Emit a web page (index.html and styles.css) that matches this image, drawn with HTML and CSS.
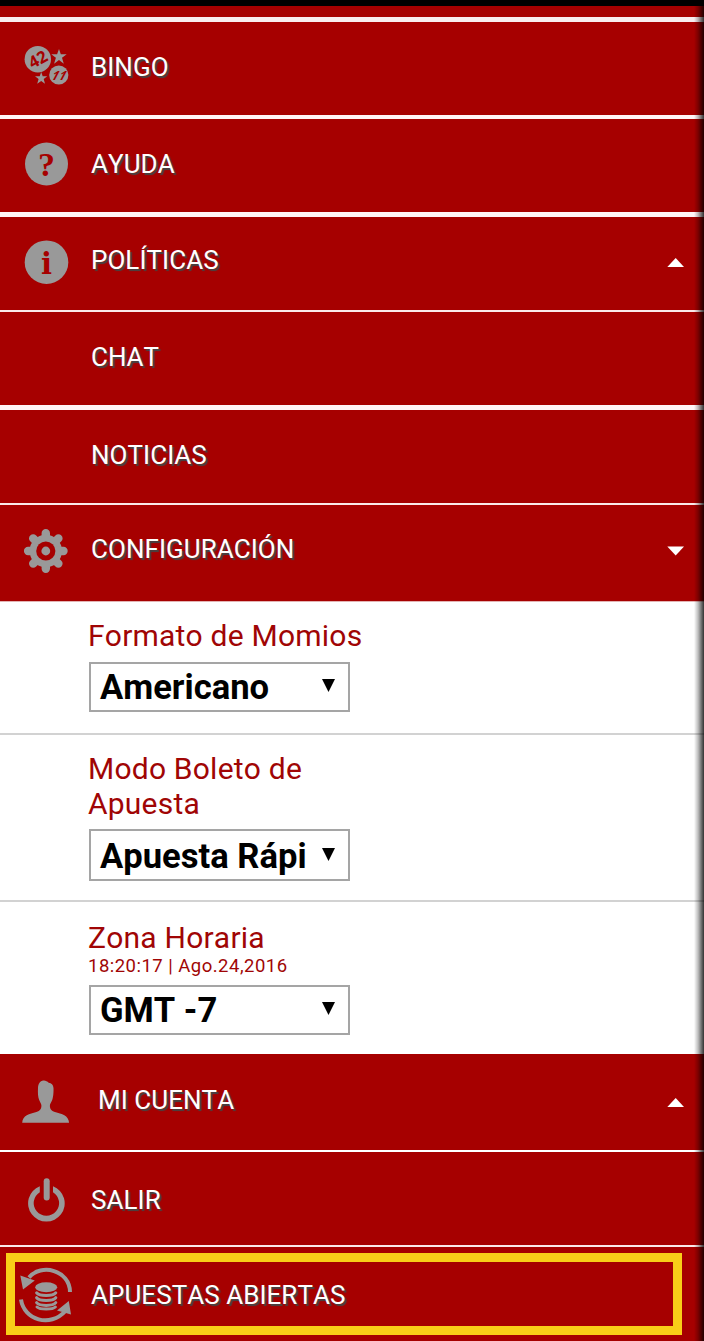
FILE: index.html
```html
<!DOCTYPE html>
<html lang="es">
<head>
<meta charset="utf-8">
<title>Menú</title>
<link rel="stylesheet" href="styles.css">
</head>
<body>
<nav class="menu">
  <div class="status"></div>
  <div class="peek"></div>

  <div class="row bingo">
    <svg class="icon" viewBox="18 22 56 93">
      <circle cx="37.8" cy="59.2" r="13.2"/>
      <circle cx="58.8" cy="75" r="9.6"/>
      <path d="M59 49l1.8 5.2h5.9l-4.7 3.5 1.8 6-4.8-3.6-4.9 3.6 1.8-6-4.6-3.5h5.8z"/>
      <path d="M41.2 72l1.5 4.2h4.6l-3.6 2.8 1.3 4.8-3.8-2.8-4 2.8 1.4-4.8-3.6-2.8h4.7z"/>
      <text class="ball" x="37.8" y="65.2" font-size="16.5" transform="rotate(-29 37.8 59.2)">42</text>
      <g transform="translate(58 79.8) skewX(-28)"><text class="ball" x="-1" y="0" font-size="12.5">11</text></g>
    </svg>
    <span class="label raise-1">BINGO</span>
  </div>

  <div class="row thick">
    <svg class="icon" viewBox="18 119 56 93">
      <circle cx="46.5" cy="164" r="21.5"/>
      <text class="glyph" x="46.5" y="175.5" font-size="34">?</text>
    </svg>
    <span class="label raise-2">AYUDA</span>
  </div>

  <div class="row thin">
    <svg class="icon" viewBox="18 217 56 93">
      <circle cx="46.5" cy="262.2" r="21.8"/>
      <text class="glyph slab" x="46.5" y="273.8" font-size="29">i</text>
    </svg>
    <span class="label raise-3">POLÍTICAS</span>
    <svg class="arrow" viewBox="667 217 17 93"><path d="M667.3 267h16.7l-8.3-9z"/></svg>
  </div>

  <div class="row thick"><span class="label sub raise-1">CHAT</span></div>
  <div class="row thin"><span class="label sub raise-1">NOTICIAS</span></div>

  <div class="row config">
    <svg class="icon" viewBox="18 505 56 96">
      <g class="gear">
        <circle cx="45.8" cy="551" r="16.2"/>
        <path d="M45.8 533.3v35.4M28.1 551h35.4M33.2 538.4l25.2 25.2M58.4 538.4L33.2 563.6"/>
      </g>
      <circle class="hole" cx="45.8" cy="551" r="9.6"/>
      <circle cx="45.8" cy="551" r="4.4"/>
    </svg>
    <span class="label raise-4">CONFIGURACIÓN</span>
    <svg class="arrow" viewBox="667 505 17 96"><path d="M667.3 546.6h16.7l-8.3 8.8z"/></svg>
  </div>

  <section class="setting first">
    <div class="caption">Formato de Momios</div>
    <div class="select"><span class="value">Americano</span><svg class="tick" viewBox="0 0 13 13"><path d="M0 0h13L6.5 13z"/></svg></div>
  </section>
  <section class="setting second">
    <div class="caption">Modo Boleto de<br>Apuesta</div>
    <div class="select tall"><span class="value">Apuesta Rápi</span><svg class="tick" viewBox="0 0 13 13"><path d="M0 0h13L6.5 13z"/></svg></div>
  </section>
  <section class="setting third">
    <div class="caption">Zona Horaria</div>
    <div class="clock">18:20:17 | Ago.24,2016</div>
    <div class="select"><span class="value">GMT -7</span><svg class="tick" viewBox="0 0 13 13"><path d="M0 0h13L6.5 13z"/></svg></div>
  </section>

  <div class="row account">
    <svg class="icon" viewBox="18 1054 56 96">
      <path d="M43.500 1080.600c-3.800.6-5.300 3.400-5.500 7.400-.3 5 .1 9.500 1.200 12 .8 2.300 2.200 3.800 2.200 5.500 0 3.500-1.200 5.200-5 6.400-7 2.200-13.800 3-14.200 10.900h46.900c-.6-7.900-7.200-8.700-14.200-10.900-3.800-1.200-5-2.900-5-6.400 0-1.700 1.500-3.200 2.300-5.500 1.100-2.500 1.500-8.500 1.300-12-.3-3.500-2-5-4.800-5.300-1.500-1.200-3.200-2.300-5.200-2.100z"/>
    </svg>
    <span class="label wide raise-2">MI CUENTA</span>
    <svg class="arrow" viewBox="667 1054 17 96"><path d="M667.3 1107h16.7l-8.3-9z"/></svg>
  </div>

  <div class="row thin">
    <svg class="icon" viewBox="18 1152 56 93">
      <path d="M39.8 1186.2v6a12.700 12.700 0 1 0 13.200 0v-6a18.300 18.300 0 1 1-13.200 0z"/>
      <path class="stem" d="M46.700 1181.200v16.300"/>
    </svg>
    <span class="label lower">SALIR</span>
  </div>

  <div class="row last">
    <svg class="icon" viewBox="18 1247 56 94">
      <path class="cycle" d="M29 1277.500C41 1263 70 1270 70 1292M21 1299.500C24 1320 50 1328 65.500 1311"/>
      <path d="M20.300 1275.500l14.500 5-11.800 9zM68.800 1301l2.200 13.500-14-4z"/>
      <ellipse cx="46.200" cy="1287.200" rx="11" ry="5"/>
      <path class="coin" d="M36.600 1292.800c3 3.700 16.200 3.700 19.200 0M36.600 1297.700c3 3.700 16.200 3.700 19.200 0M36.600 1302.600c3 3.700 16.200 3.700 19.200 0"/>
      <path class="coin" d="M37 1307c3 2.800 15.400 2.800 18.400 0"/>
    </svg>
    <span class="label lower">APUESTAS ABIERTAS</span>
  </div>
  <div class="highlight"></div>
  <div class="edge"></div>
</nav>
</body>
</html>
```
FILE: styles.css
```css
* { box-sizing: border-box; }

body {
  margin: 0;
  background: #a60000;
  font-family: Roboto, "Liberation Sans", sans-serif;
  font-kerning: none;
}

.menu {
  position: relative;
  width: 704px;
  height: 1341px;
  overflow: hidden;
  background: #a60000;
}

.status { height: 6px; background: #000; }

.peek {
  height: 16px;
  border-bottom: 5px solid #f8ecee;
}

.row {
  display: flex;
  align-items: center;
  padding: 0 20px 0 18px;
  background: #a60000;
}

.bingo { height: 97px; border-bottom: 4px solid #fff4f6; }
.thick { height: 98px; border-bottom: 5px solid #fff4f6; }
.thin { height: 95px; border-bottom: 2px solid #fbe9e9; }
.config { height: 97px; border-bottom: 1px solid #e3b3b3; }
.account { height: 98px; border-bottom: 2px solid #fff; }
.last { height: 94px; }

.icon {
  flex: none;
  width: 56px;
  height: 100%;
  fill: #999;
}

.label {
  flex: 1;
  margin-left: 17px;
  font-size: 26px;
  line-height: 30px;
  letter-spacing: 0.04px;
  color: #fff;
  text-shadow: 2px 2px 1px #444;
  white-space: nowrap;
}

.sub { margin-left: 73px; }
.wide { margin-left: 24px; }
.raise-1 { margin-bottom: 3px; }
.raise-2 { margin-bottom: 4px; }
.raise-3 { margin-bottom: 8px; }
.raise-4 { margin-bottom: 9px; }
.lower { margin-top: 2px; }

.arrow {
  flex: none;
  width: 17px;
  height: 100%;
  fill: #fff;
}

.ball {
  fill: #a60000;
  font-family: "Open Sans", sans-serif;
  font-weight: 700;
  text-anchor: middle;
}

.glyph {
  fill: #a60000;
  font-family: "Liberation Serif", serif;
  font-weight: 700;
  text-anchor: middle;
}

.slab { font-family: "DejaVu Serif", serif; }

.gear path { stroke: #999; stroke-width: 8.4; stroke-linecap: round; }
.hole { fill: #a60000; }
.stem { stroke: #999; stroke-width: 6; stroke-linecap: round; }
.cycle { fill: none; stroke: #999; stroke-width: 4; }
.coin { fill: none; stroke: #999; stroke-width: 3; stroke-linecap: round; }

.setting {
  padding-left: 88px;
  background: #fff;
  color: #a00505;
}

.first { height: 133px; padding-top: 16px; border-bottom: 2px solid #d2d2d2; }
.second { height: 167px; padding-top: 16px; border-bottom: 2px solid #d2d2d2; }
.third { height: 152px; padding-top: 18px; }

.caption {
  font-size: 30px;
  line-height: 35px;
  letter-spacing: 0.22px;
}

.clock {
  font-size: 18.5px;
  line-height: 22px;
  letter-spacing: 0.48px;
}

.select {
  display: flex;
  align-items: center;
  justify-content: space-between;
  width: 261px;
  height: 50px;
  margin: 8px 0 0 1px;
  padding: 0 13px 0 9px;
  border: 2px solid #a5a5a5;
  background: #fff;
  color: #000;
}

.first .select { margin-top: 9px; }
.tall { height: 52px; padding-top: 2px; }

.value {
  font-size: 34.6px;
  line-height: 40px;
  font-weight: 700;
  white-space: nowrap;
}

.tick { width: 13px; height: 13px; margin-bottom: 3px; }

.highlight {
  position: absolute;
  left: 6px;
  top: 1253px;
  width: 676px;
  height: 82px;
  border: 9px solid #f9ce18;
}

.edge {
  position: absolute;
  top: 0;
  right: 0;
  width: 10px;
  height: 100%;
  background: linear-gradient(to right, rgba(0,0,0,0), rgba(0,0,0,.25) 40%, rgba(0,0,0,.8));
}
```
